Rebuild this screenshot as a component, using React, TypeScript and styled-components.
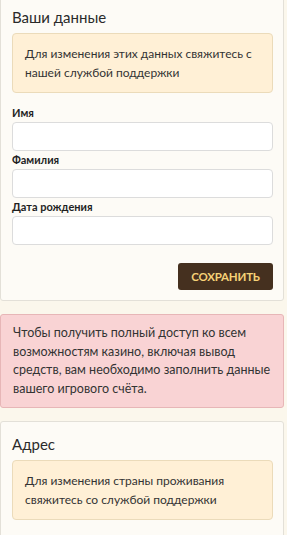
import React from 'react';
import styled, { createGlobalStyle } from 'styled-components';

const GlobalStyle = createGlobalStyle`
  html, body {
    margin: 0;
    padding: 0;
    background: #fbf7ec;
  }

  body {
    font-family: Lato, 'Open Sans', sans-serif;
    color: #2b2b2b;
  }
`;

const Page = styled.div`
  display: flex;
  flex-direction: column;
  gap: 13px;
  width: 284px;
  margin-top: -6px;
`;

const Card = styled.section<{ $tail?: number }>`
  background: #fdfbf6;
  border: 1px solid #e3e0d8;
  border-radius: 3px;
  padding: 12px 10px ${(p) => p.$tail ?? 10}px 11px;
`;

const Title = styled.h2`
  margin: 0 0 6px;
  font-size: 15px;
  font-weight: 400;
  color: #2a2a2a;
  line-height: 20px;
`;

const Notice = styled.div`
  background: #fff0d6;
  border: 1px solid #ebdbba;
  border-radius: 4px;
  padding: 10px 12px;
  font-size: 12px;
  line-height: 19px;
  color: #333;
`;

const Form = styled.form`
  display: flex;
  flex-direction: column;
  margin-top: 13px;
`;

const Label = styled.label`
  font-size: 11px;
  font-weight: 700;
  color: #1f1f1f;
  line-height: 14px;
  margin-bottom: 2px;
`;

const Input = styled.input`
  box-sizing: border-box;
  height: 29px;
  width: 100%;
  background: #fff;
  border: 1px solid #dcdcdc;
  border-radius: 4px;
  margin: 0 0 2px;
  font: inherit;
`;

const Actions = styled.div`
  display: flex;
  justify-content: flex-end;
  margin-top: 16px;
`;

const SaveButton = styled.button`
  width: 95px;
  height: 27px;
  border: 0;
  border-radius: 3px;
  background: #45301f;
  color: #f6d277;
  font-family: inherit;
  font-size: 11.5px;
  font-weight: 700;
  text-transform: uppercase;
  letter-spacing: -0.2px;
`;

const Alert = styled.div`
  background: #f9d3d4;
  border: 1px solid #e7b6b7;
  border-radius: 3px;
  padding: 9px 12px;
  font-size: 12.5px;
  line-height: 18.5px;
  color: #333;
`;

export default function App() {
  return (
    <>
      <GlobalStyle />
      <Page>
        <Card>
          <Title>Ваши данные</Title>
          <Notice>Для изменения этих данных свяжитесь с нашей службой поддержки</Notice>
          <Form onSubmit={(e) => e.preventDefault()}>
            <Label>Имя</Label>
            <Input />
            <Label>Фамилия</Label>
            <Input />
            <Label>Дата рождения</Label>
            <Input />
            <Actions>
              <SaveButton type="submit">Сохранить</SaveButton>
            </Actions>
          </Form>
        </Card>

        <Alert>
          Чтобы получить полный доступ ко всем возможностям казино, включая вывод
          средств, вам необходимо заполнить данные вашего игрового счёта.
        </Alert>

        <Card $tail={40}>
          <Title>Адрес</Title>
          <Notice>Для изменения страны проживания свяжитесь со службой поддержки</Notice>
        </Card>
      </Page>
    </>
  );
}
